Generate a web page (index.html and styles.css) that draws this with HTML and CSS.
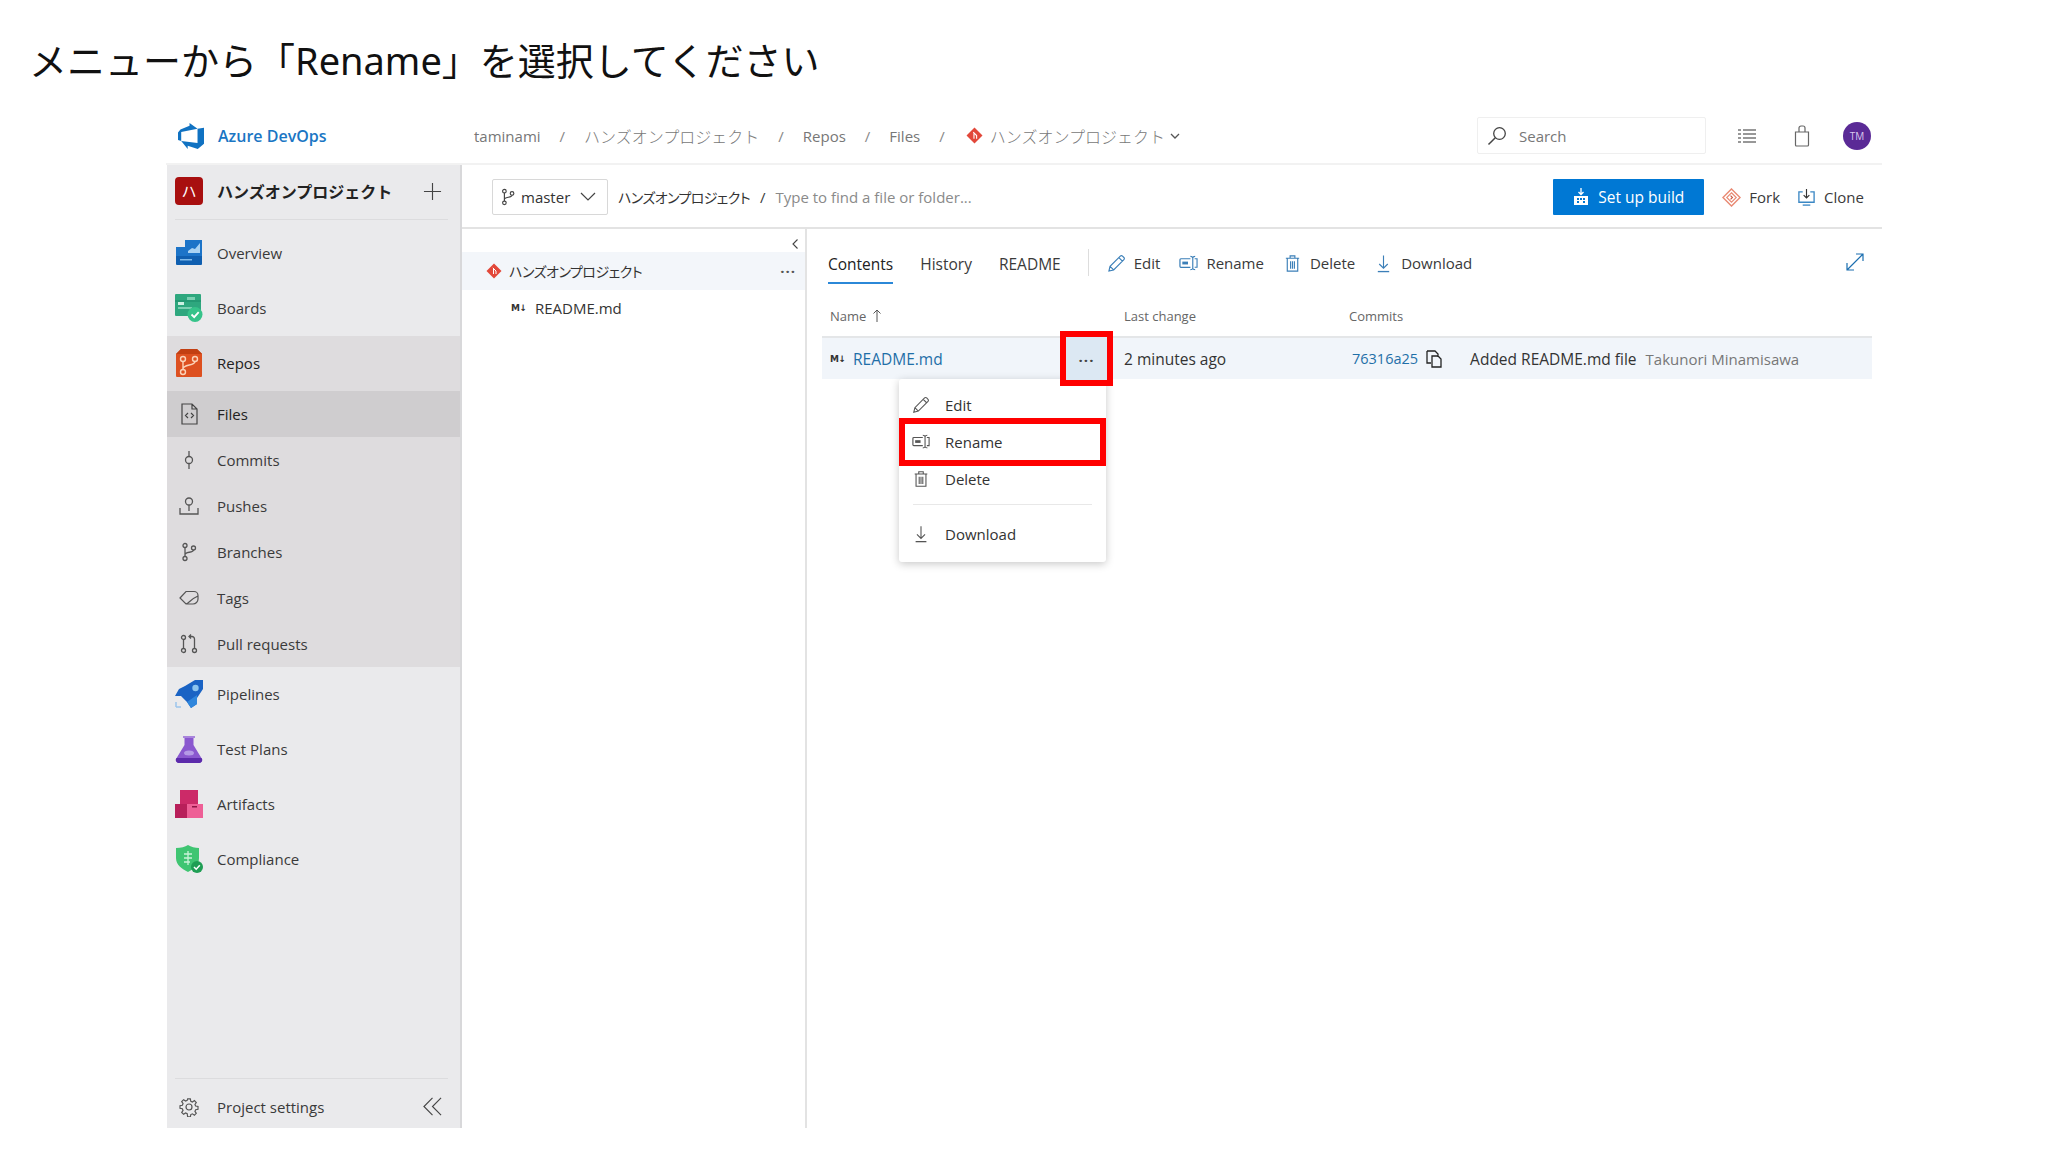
FILE: index.html
```html
<!DOCTYPE html>
<html lang="ja">
<head>
    <meta charset="UTF-8">
    <title>Rename</title>
    <link rel="stylesheet" href="styles.css">
</head>
<body>
    <svg class="defs" width="0" height="0">
        <symbol id="i-branch" viewBox="0 0 20 20"><g fill="none" stroke="currentColor" stroke-width="1.3"><circle cx="6" cy="3.5" r="2"/><circle cx="6" cy="16.5" r="2"/><circle cx="14.5" cy="6" r="2"/><path d="M6 5.5v9M6 12.5c0-3 8.5-1.5 8.5-4.5"/></g></symbol>
        <symbol id="i-git" viewBox="0 0 16 16"><path d="M8 .5 15.5 8 8 15.5.5 8z" fill="#e2483a"/><path d="M6.8 4.8 10 8v3M7.5 5.5V11" fill="none" stroke="#fff" stroke-width="1"/></symbol>
        <symbol id="i-pencil" viewBox="0 0 20 20"><path d="M2 18l1.2-5L14 2.2a1.6 1.6 0 0 1 2.3 0l1.5 1.5a1.6 1.6 0 0 1 0 2.3L7 16.8zM3.2 13 7 16.8M12.5 3.8l3.7 3.7" fill="none" stroke="currentColor" stroke-width="1.2"/></symbol>
        <symbol id="i-rename" viewBox="0 0 20 20"><path d="M12 5H2a1 1 0 0 0-1 1v7a1 1 0 0 0 1 1h10" fill="none" stroke="currentColor" stroke-width="1.3"/><path d="M3.5 8h6v3h-6z" fill="currentColor"/><path d="M12 2.500c1.500 0 2.300.5 2.500 1.500v11c.2 1 1 1.500 2.500 1.500M14.500 4c.2-1 1-1.500 2.500-1.500M14.500 15c-.2 1-1 1.500-2.500 1.500M16.500 5H19v9h-2.500" fill="none" stroke="currentColor" stroke-width="1.200"/></symbol>
        <symbol id="i-trash" viewBox="0 0 20 20"><path d="M3 4.500h14M7.500 4.500V2h5v2.500M4.500 4.500v13.500h11V4.500M8 7.500v8M10 7.500v8M12 7.500v8" fill="none" stroke="currentColor" stroke-width="1.200"/></symbol>
        <symbol id="i-down" viewBox="0 0 20 20"><path d="M10 1.500v13M5.500 10.500l4.500 4.500 4.500-4.500" fill="none" stroke="currentColor" stroke-width="1.200"/><path d="M4 18.500h12" stroke="currentColor" stroke-width="1.400"/></symbol>
    </svg>

    <h1 class="slideTitle">メニューから「Rename」を選択してください</h1>

    <div class="app">
        <header class="topBar">
            <div class="brand">
                <svg class="brandLogo" viewBox="0 0 24 24"><path fill="#1072c2" d="M0 8.877 2.247 5.91l8.405-3.416V.022l7.37 5.393L2.966 8.338v8.225L0 15.707zm24-4.45v14.651l-5.753 4.9-9.303-3.057v3.056l-5.978-7.416 15.057 1.798V5.415z"/></svg>
                <span class="brandName">Azure DevOps</span>
            </div>
            <nav class="crumbs">
                <span>taminami</span><i>/</i>
                <span class="cjk">ハンズオンプロジェクト</span><i>/</i>
                <span>Repos</span><i>/</i>
                <span>Files</span><i>/</i>
                <svg class="crumbGit"><use href="#i-git"/></svg>
                <span class="cjk">ハンズオンプロジェクト</span>
                <svg class="crumbChevron" viewBox="0 0 10 10"><path d="M1 3l4 4 4-4" fill="none" stroke="#555" stroke-width="1.300"/></svg>
            </nav>
            <div class="searchBox">
                <svg class="searchIcon" viewBox="0 0 20 20"><circle cx="12.500" cy="7.500" r="5.800" fill="none" stroke="#444" stroke-width="1.300"/><path d="M8.300 11.700 1.500 18.500" stroke="#444" stroke-width="1.500"/></svg>
                <span>Search</span>
            </div>
            <svg class="topIcon listIcon" viewBox="0 0 20 20"><path d="M6 4h13M6 8h13M6 12h13M6 16h13M1 4h3M1 8h3M1 12h3M1 16h3" stroke="#777" stroke-width="1.300"/></svg>
            <svg class="topIcon bagIcon" viewBox="0 0 16 22"><path d="M1.500 7h13v13a1 1 0 0 1-1 1h-11a1 1 0 0 1-1-1zM5 7V3a2 2 0 0 1 2-2h2a2 2 0 0 1 2 2v4" fill="none" stroke="#666" stroke-width="1.200"/></svg>
            <div class="avatar">TM</div>
        </header>

        <div class="body">
            <aside class="sidebar">
                <div class="projectHead">
                    <span class="projectTile">ハ</span>
                    <span class="projectName">ハンズオンプロジェクト</span>
                    <svg class="plusIcon" viewBox="0 0 20 20"><path d="M10 1v18M1 10h18" stroke="#444" stroke-width="1.200"/></svg>
                </div>
                <ul class="navList">
                    <li class="navItem">
                        <span class="navIcon"><svg width="28" height="28" viewBox="0 0 28 28"><path d="M10 1h17v24H1V8h9z" fill="#1c74c8"/><path d="M1 17h26v8a1 1 0 0 1-1 1H2a1 1 0 0 1-1-1z" fill="#0f5fb0"/><path d="M13 12l4-3 3 1 5-6v10H13z" fill="#a9d3f3"/><path d="M5 20h12v1.500H5z" fill="#7db8e8"/></svg></span>
                        <span>Overview</span>
                    </li>
                    <li class="navItem">
                        <span class="navIcon"><svg width="28" height="28" viewBox="0 0 28 28"><rect x="0" y="0" width="26" height="22" rx="1" fill="#2ea77e"/><path d="M0 7h26" stroke="#1b8a68" stroke-width="1"/><rect x="3" y="8" width="6" height="3" fill="#cdf0e2"/><rect x="12" y="3" width="8" height="3" fill="#7bd0b2"/><rect x="3" y="13" width="14" height="2" fill="#7bd0b2"/><circle cx="20" cy="20.500" r="7.500" fill="#36c38a"/><path d="M16.500 20.500l2.700 2.700 4.500-5" fill="none" stroke="#fff" stroke-width="1.800"/></svg></span>
                        <span>Boards</span>
                    </li>
                    <li class="navItem navGroup">
                        <span class="navIcon"><svg width="26" height="28" viewBox="0 0 26 28"><path d="M5 0h16l5 5v22a1 1 0 0 1-1 1H1a1 1 0 0 1-1-1V5z" fill="#dd5020"/><path d="M0 5h26v-.200L21 0H5z" fill="#c23f12"/><g fill="none" stroke="#fbd2b8" stroke-width="1.400"><circle cx="7" cy="10" r="2.500"/><circle cx="19" cy="10" r="2.500"/><circle cx="7" cy="23" r="2.500"/><path d="M7 12.500v8M7 20c0-5 12-3 12-7.500"/></g></svg></span>
                        <span class="navGroupLabel">Repos</span>
                    </li>
                    <li class="navItem navSub navCurrent">
                        <span class="navIcon"><svg width="17" height="22" viewBox="0 0 17 22"><path d="M1 1h10l5 5v15H1zM11 1v5h5M7 10l-2.500 2.500L7 15M10 10l2.500 2.500L10 15" fill="none" stroke="#444" stroke-width="1.200"/></svg></span>
                        <span>Files</span>
                    </li>
                    <li class="navItem navSub">
                        <span class="navIcon"><svg width="12" height="20" viewBox="0 0 12 20"><circle cx="6" cy="10" r="3.500" fill="none" stroke="#555" stroke-width="1.300"/><path d="M6 1v5.500M6 13.500V19" stroke="#555" stroke-width="1.300"/></svg></span>
                        <span>Commits</span>
                    </li>
                    <li class="navItem navSub">
                        <span class="navIcon"><svg width="20" height="18" viewBox="0 0 20 18"><circle cx="10" cy="4.500" r="3.500" fill="none" stroke="#555" stroke-width="1.300"/><path d="M10 8v6M1 11v6h18v-6" fill="none" stroke="#555" stroke-width="1.300"/></svg></span>
                        <span>Pushes</span>
                    </li>
                    <li class="navItem navSub">
                        <span class="navIcon branchNav"><svg width="20" height="20"><use href="#i-branch"/></svg></span>
                        <span>Branches</span>
                    </li>
                    <li class="navItem navSub">
                        <span class="navIcon"><svg width="20" height="16" viewBox="0 0 20 16"><path d="M1 8l6-6.500h8a4 4 0 0 1 4 4V9a5 5 0 0 1-5 5H7zM7 14c3-1 5-5 12-8" fill="none" stroke="#555" stroke-width="1.200"/></svg></span>
                        <span>Tags</span>
                    </li>
                    <li class="navItem navSub">
                        <span class="navIcon"><svg width="18" height="20" viewBox="0 0 18 20"><g fill="none" stroke="#555" stroke-width="1.300"><circle cx="3.500" cy="3.500" r="2"/><circle cx="3.500" cy="16.500" r="2"/><circle cx="14.500" cy="16.500" r="2"/><path d="M3.500 5.500v9M14.500 14.500V5a2.500 2.500 0 0 0-2.500-2.500h-2M11 .5 9 2.500l2 2"/></g></svg></span>
                        <span>Pull requests</span>
                    </li>
                    <li class="navItem">
                        <span class="navIcon"><svg width="28" height="28" viewBox="0 0 28 28"><path d="M10 6 20 0h8v9l-6 9v6l-6 4-4-6-6-6H0l4-7z" fill="#1a63c4"/><path d="M22 15v9l-6 4-4-6z" fill="#2f86dc"/><circle cx="20.500" cy="8" r="3.200" fill="#8cc4ee"/><path d="M1 27h5M1 22v5" stroke="#9cc5ec" stroke-width="1.500"/></svg></span>
                        <span>Pipelines</span>
                    </li>
                    <li class="navItem">
                        <span class="navIcon"><svg width="28" height="28" viewBox="0 0 28 28"><path d="M8 1h12v2h-1.500v7L27 24a3 3 0 0 1-2.500 4h-21A3 3 0 0 1 1 24L9.500 10V3H8z" fill="#8a58cf"/><path d="M1.500 23h25l.5 1a3 3 0 0 1-2.500 4h-21A3 3 0 0 1 1 24z" fill="#5c2bab"/><path d="M8 1h12v2H8z" fill="#a985dc"/><ellipse cx="14" cy="18" rx="5" ry="2.500" fill="#b59ae6"/></svg></span>
                        <span>Test Plans</span>
                    </li>
                    <li class="navItem">
                        <span class="navIcon"><svg width="28" height="28" viewBox="0 0 28 28"><rect x="5" y="0" width="18" height="14" fill="#cc2a68"/><rect x="0" y="14" width="12" height="14" fill="#b81f5a"/><rect x="12" y="14" width="16" height="14" fill="#ee5f96"/><rect x="17" y="16" width="5" height="1.500" fill="#8e1546"/></svg></span>
                        <span>Artifacts</span>
                    </li>
                    <li class="navItem">
                        <span class="navIcon"><svg width="28" height="28" viewBox="0 0 28 28"><path d="M13 0c3 2 7 3 11 3v10c0 7-5 11-11 14C7 24 1 20 1 13V3c5 0 9-1 12-3z" fill="#3fc572"/><path d="M9 9h8M9 13h8M9 17h6M13 6v14" stroke="#c9f2d8" stroke-width="1.300"/><circle cx="22" cy="22" r="6" fill="#1f9e54"/><path d="M19 22l2.200 2.200 3.600-4" fill="none" stroke="#fff" stroke-width="1.500"/></svg></span>
                        <span>Compliance</span>
                    </li>
                </ul>
                <div class="sideFoot">
                    <span class="navIcon"><svg width="20" height="20" viewBox="0 0 20 20"><path d="M8.500 1h3l.5 2.600 1.800.8 2.200-1.500 2.100 2.100-1.500 2.200.8 1.800 2.600.5v3l-2.600.5-.8 1.800 1.500 2.200-2.100 2.100-2.200-1.500-1.800.8-.5 2.600h-3L8 17.400l-1.800-.8L4 18.100 1.900 16l1.500-2.200-.8-1.800L0 11.500v-3L2.600 8l.8-1.800L1.900 4 4 1.900l2.200 1.500L8 2.600z" transform="translate(1 1) scale(.9)" fill="none" stroke="#555" stroke-width="1.300"/><circle cx="10" cy="10" r="3" fill="none" stroke="#555" stroke-width="1.200"/></svg></span>
                    <span class="footLabel">Project settings</span>
                    <svg class="collapseIcon" viewBox="0 0 20 20"><path d="M10 1 1 10l9 9M19 1l-9 9 9 9" fill="none" stroke="#444" stroke-width="1.200"/></svg>
                </div>
            </aside>

            <main class="main">
                <div class="pathBar">
                    <div class="branchPicker">
                        <svg class="pickerBranch"><use href="#i-branch"/></svg>
                        <span>master</span>
                        <svg class="pickerChevron" viewBox="0 0 16 10"><path d="M1 1l7 7 7-7" fill="none" stroke="#444" stroke-width="1.200"/></svg>
                    </div>
                    <span class="pathRepo">ハンズオンプロジェクト</span>
                    <span class="pathSlash">/</span>
                    <span class="pathHint">Type to find a file or folder...</span>
                    <button class="buildBtn">
                        <svg viewBox="0 0 16 18"><path d="M8 0v6M5.500 4 8 6.500 10.500 4" fill="none" stroke="#fff" stroke-width="1.300"/><path d="M1 8h14v9H1z" fill="#fff"/><path d="M4 10h2v2H4zM7 10h2v2H7zM10 10h2v2h-2zM4 13h2v2H4zM10 13h2v2h-2z" fill="#0078d4"/></svg>
                        Set up build
                    </button>
                    <span class="pathAction forkAction">
                        <svg viewBox="0 0 20 20"><path d="M10 1l9 9-9 9-9-9z" fill="none" stroke="#e98a74" stroke-width="1.500"/><path d="M10 5l5 5-5 5-5-5z" fill="none" stroke="#e98a74" stroke-width="1.200"/><path d="M9 8l2 2-2 2" fill="none" stroke="#c9553f" stroke-width="1.200"/></svg>
                        Fork
                    </span>
                    <span class="pathAction">
                        <svg viewBox="0 0 20 20"><path d="M6 4H2v11h16V4h-4" fill="none" stroke="#3a87c4" stroke-width="1.400"/><path d="M10 1v9M7 7.500l3 3 3-3" fill="none" stroke="#333" stroke-width="1.200"/><path d="M6 18h8" stroke="#3a87c4" stroke-width="1.400"/></svg>
                        Clone
                    </span>
                </div>

                <div class="panes">
                    <section class="tree">
                        <div class="treeTop">
                            <svg viewBox="0 0 8 12"><path d="M6.500 1.500 2 6l4.500 4.500" fill="none" stroke="#444" stroke-width="1.100"/></svg>
                        </div>
                        <div class="treeRow treeSelected">
                            <svg class="gitIcon"><use href="#i-git"/></svg>
                            <span class="treeName">ハンズオンプロジェクト</span>
                            <span class="moreDots">···</span>
                        </div>
                        <div class="treeRow treeFile">
                            <span class="mdMark">M↓</span>
                            <span>README.md</span>
                        </div>
                    </section>

                    <section class="detail">
                        <div class="tabBar">
                            <span class="tab tabCurrent">Contents</span>
                            <span class="tab">History</span>
                            <span class="tab">README</span>
                            <span class="tabSep"></span>
                            <span class="cmd"><svg><use href="#i-pencil"/></svg>Edit</span>
                            <span class="cmd"><svg><use href="#i-rename"/></svg>Rename</span>
                            <span class="cmd"><svg><use href="#i-trash"/></svg>Delete</span>
                            <span class="cmd"><svg><use href="#i-down"/></svg>Download</span>
                            <svg class="expandIcon" viewBox="0 0 18 18"><path d="M1 17 17 1M10 1h7v7M1 10v7h7" fill="none" stroke="#1c6fb0" stroke-width="1.200"/></svg>
                        </div>
                        <div class="fileHead">
                            <span class="nameHead">Name <svg viewBox="0 0 10 14"><path d="M5 13V1M1.500 4.500 5 1l3.500 3.500" fill="none" stroke="#555" stroke-width="1"/></svg></span>
                            <span>Last change</span>
                            <span>Commits</span>
                        </div>
                        <div class="fileRow">
                            <span class="nameCell"><span class="mdMark">M↓</span><span class="fileLink">README.md</span></span>
                            <span>2 minutes ago</span>
                            <span class="commitCell">
                                <span class="hash">76316a25</span>
                                <svg class="copyIcon" viewBox="0 0 16 18"><path d="M1 1h8l3 3v3M1 1v12h4M6 6h6l3 3v8H6z" fill="none" stroke="#222" stroke-width="1.300"/></svg>
                                <span class="commitMsg">Added README.md file</span>
                                <span class="commitAuthor">Takunori Minamisawa</span>
                            </span>
                        </div>
                    </section>
                </div>
            </main>
        </div>

        <!-- callouts over the page -->
        <div class="contextMenu">
            <div class="menuItem"><svg><use href="#i-pencil"/></svg>Edit</div>
            <div class="menuItem menuPicked"><svg><use href="#i-rename"/></svg>Rename</div>
            <div class="menuItem"><svg><use href="#i-trash"/></svg>Delete</div>
            <div class="menuSep"></div>
            <div class="menuItem"><svg><use href="#i-down"/></svg>Download</div>
        </div>
        <div class="dotsCallout">···</div>
    </div>
</body>
</html>
```

FILE: styles.css
```css
*{
    margin:0;
    padding:0;
    box-sizing:border-box;
}
body{
    background:#fff;
    font-family:"Open Sans","Noto Sans CJK JP",sans-serif;
    font-size:15px;
    color:#3a3a3a;
    height:1152px;
    overflow:hidden;
}
.defs{
    position:absolute;
}
.slideTitle{
    height:110px;
    padding:35px 0 0 29px;
    font-family:"Noto Sans","Noto Sans CJK JP",sans-serif;
    font-weight:400;
    font-size:38px;
    line-height:50px;
    color:#111;
}
.app{
    position:relative;
    width:1716px;
    height:1018px;
    margin-left:166px;
    display:flex;
    flex-direction:column;
}

/* top bar */
.topBar{
    height:55px;
    flex:none;
    display:flex;
    align-items:center;
    border-bottom:2px solid #f2f2f2;
    padding-bottom:2px;
}
.brand{
    width:308px;
    padding-left:12px;
    display:flex;
    align-items:center;
    gap:14px;
}
.brandLogo{
    width:26px;
    height:26px;
}
.brandName{
    font-weight:600;
    font-size:16px;
    color:#1a76c4;
}
.crumbs{
    width:1003px;
    display:flex;
    align-items:center;
    white-space:nowrap;
    color:#777;
}
.crumbs i{
    font-style:normal;
    margin:0 19px;
    color:#888;
}
.crumbs .cjk{
    font-size:16px;
    font-weight:300;
}
.crumbGit{
    width:17px;
    height:17px;
    margin:0 7px 0 2px;
}
.crumbChevron{
    width:10px;
    height:10px;
    margin-left:5px;
}
.searchBox{
    width:229px;
    height:37px;
    display:flex;
    align-items:center;
    gap:12px;
    padding-left:9px;
    border:1px solid #efefef;
    border-radius:2px;
    color:#777;
}
.searchIcon{
    width:20px;
    height:20px;
}
.topIcon{
    height:22px;
}
.listIcon{
    width:20px;
    margin-left:31px;
}
.bagIcon{
    width:16px;
    margin-left:37px;
}
.avatar{
    width:28px;
    height:28px;
    margin-left:33px;
    border-radius:50%;
    background:#5a2a96;
    color:#d9c8ec;
    font-size:10px;
    line-height:28px;
    text-align:center;
}

.body{
    flex:1;
    display:flex;
    min-height:0;
}

/* sidebar */
.sidebar{
    width:295px;
    flex:none;
    margin-left:1px;
    display:flex;
    flex-direction:column;
    background:#eaeaec;
    border-right:2px solid #d8d8da;
}
.projectHead{
    height:55px;
    margin:0 12px 0 8px;
    padding-bottom:2px;
    display:flex;
    align-items:center;
    border-bottom:1px solid #dcdcde;
}
.projectTile{
    width:28px;
    height:28px;
    border-radius:4px;
    background:#a80f0f;
    color:#fff;
    font-size:15px;
    line-height:28px;
    text-align:center;
}
.projectName{
    margin-left:14px;
    font-weight:700;
    font-size:16px;
    color:#222;
}
.plusIcon{
    width:19px;
    height:19px;
    margin-left:auto;
    margin-right:6px;
}
.navList{
    list-style:none;
    margin-top:6px;
}
.navItem{
    height:55px;
    display:flex;
    align-items:center;
    gap:14px;
    padding:0 0 2px 8px;
}
.navIcon{
    width:28px;
    display:flex;
    justify-content:center;
    flex:none;
}
.branchNav{
    color:#555;
}
.navGroup{
    background:#dedcde;
    color:#222;
}
.navGroupLabel{
    font-weight:500;
}
.navSub{
    height:46px;
    padding-bottom:0;
    background:#dedcde;
}
.navCurrent{
    background:#cfcdcf;
    color:#222;
    font-weight:500;
}
.sideFoot{
    margin:auto 12px 0 8px;
    height:50px;
    padding-top:6px;
    display:flex;
    align-items:center;
    gap:14px;
    border-top:1px solid #dcdcde;
}
.collapseIcon{
    width:19px;
    height:19px;
    margin-left:auto;
    margin-right:6px;
}

/* path bar */
.main{
    flex:1;
    min-width:0;
    display:flex;
    flex-direction:column;
}
.pathBar{
    height:64px;
    flex:none;
    display:flex;
    align-items:center;
    padding:2px 18px 0 30px;
    border-bottom:2px solid #e3e3e3;
}
.branchPicker{
    width:116px;
    height:36px;
    display:flex;
    align-items:center;
    padding-left:6px;
    gap:4px;
    border:1px solid #d8d8d8;
    border-radius:2px;
    color:#333;
}
.pickerBranch{
    width:18px;
    height:18px;
    color:#444;
}
.pickerChevron{
    width:16px;
    height:10px;
    margin-left:6px;
}
.pathRepo{
    margin-left:10px;
    font-size:14px;
    font-feature-settings:"palt";
    letter-spacing:-.6px;
    color:#333;
}
.pathSlash{
    margin:0 10px;
}
.pathHint{
    color:#8a8a8a;
}
.buildBtn{
    margin-left:auto;
    width:151px;
    height:36px;
    display:flex;
    align-items:center;
    justify-content:center;
    gap:9px;
    border:none;
    border-radius:1px;
    background:#0078d4;
    color:#fff;
    font:inherit;
    font-size:15.500px;
}
.buildBtn svg{
    width:16px;
    height:18px;
}
.pathAction{
    display:flex;
    align-items:center;
    gap:8px;
    margin-left:17px;
}
.pathAction svg{
    width:19px;
    height:19px;
}
.forkAction{
    margin-left:18px;
}

/* tree */
.panes{
    flex:1;
    display:flex;
    min-height:0;
}
.tree{
    width:345px;
    flex:none;
    border-right:2px solid #e3e3e3;
}
.treeTop{
    height:23px;
    display:flex;
    justify-content:flex-end;
    align-items:flex-end;
    padding:0 6px 2px 0;
}
.treeTop svg{
    width:8px;
    height:12px;
}
.treeRow{
    display:flex;
    align-items:center;
    color:#333;
}
.treeSelected{
    height:38px;
    padding:0 9px 0 24px;
    gap:7px;
    background:#f3f6fa;
}
.gitIcon{
    width:16px;
    height:16px;
}
.treeName{
    font-size:14px;
    font-feature-settings:"palt";
    letter-spacing:-.5px;
}
.moreDots{
    margin-left:auto;
    font-weight:700;
    letter-spacing:1px;
    color:#555;
}
.treeFile{
    height:36px;
    padding-left:49px;
    gap:7px;
}
.mdMark{
    width:17px;
    font-family:"DejaVu Sans",sans-serif;
    font-size:9px;
    font-weight:700;
    letter-spacing:-.5px;
    color:#333;
    white-space:nowrap;
}

/* contents */
.detail{
    flex:1;
    min-width:0;
    padding:0 10px 0 15px;
}
.tabBar{
    height:55px;
    display:flex;
    align-items:flex-start;
    padding-left:6px;
}
.tab{
    margin-right:27px;
    padding:25px 0 8px;
    font-size:15.500px;
    line-height:20px;
    border-bottom:2px solid transparent;
}
.tabCurrent{
    border-bottom-color:#2b88d8;
    font-weight:500;
    color:#222;
}
.tabSep{
    width:1px;
    height:27px;
    margin:20px 18px 0 0;
    background:#ddd;
}
.cmd{
    display:flex;
    align-items:center;
    gap:8px;
    margin-right:19px;
    padding-top:24px;
    line-height:20px;
}
.cmd svg{
    width:19px;
    height:19px;
    color:#3b7fb8;
}
.expandIcon{
    width:18px;
    height:18px;
    margin:24px 8px 0 auto;
}
.fileHead{
    height:54px;
    display:grid;
    grid-template-columns:302px 225px 1fr;
    align-items:end;
    padding-bottom:11px;
    font-size:13px;
    color:#666;
    border-bottom:2px solid #e4e6e8;
}
.nameHead{
    display:flex;
    align-items:center;
    gap:6px;
    padding-left:8px;
}
.nameHead svg{
    width:10px;
    height:14px;
}
.fileRow{
    height:41px;
    display:grid;
    grid-template-columns:302px 225px 1fr;
    align-items:center;
    background:#f1f5fa;
    font-size:15.500px;
    color:#333;
}
.nameCell{
    display:flex;
    align-items:center;
    gap:6px;
    padding-left:8px;
}
.fileLink,
.hash{
    color:#1f6fa8;
}
.hash{
    font-size:14.500px;
}
.commitCell{
    display:flex;
    align-items:center;
    padding-left:3px;
}
.copyIcon{
    width:16px;
    height:18px;
    margin:0 28px 0 8px;
}
.commitAuthor{
    margin-left:9px;
    font-size:15px;
    color:#777;
}

/* callouts */
.dotsCallout{
    position:absolute;
    left:894px;
    top:221px;
    width:53px;
    height:55px;
    border:6px solid #f00;
    background:#dce8f3;
    color:#444;
    font-weight:700;
    line-height:47px;
    letter-spacing:1px;
    text-align:center;
}
.contextMenu{
    position:absolute;
    left:733px;
    top:269px;
    width:207px;
    height:183px;
    padding-top:7px;
    background:#fff;
    border-radius:3px;
    box-shadow:0 2px 8px rgba(0,0,0,.22);
}
.menuItem{
    position:relative;
    height:37px;
    display:flex;
    align-items:center;
    gap:15px;
    padding-left:13px;
    color:#333;
}
.menuItem svg{
    width:18px;
    height:18px;
    color:#555;
}
.menuPicked::after{
    content:"";
    position:absolute;
    left:0;
    right:0;
    top:-5px;
    bottom:-6px;
    border:6px solid #f00;
}
.menuSep{
    height:1px;
    margin:7px 14px 10px 14px;
    background:#e8e8e8;
}
```
